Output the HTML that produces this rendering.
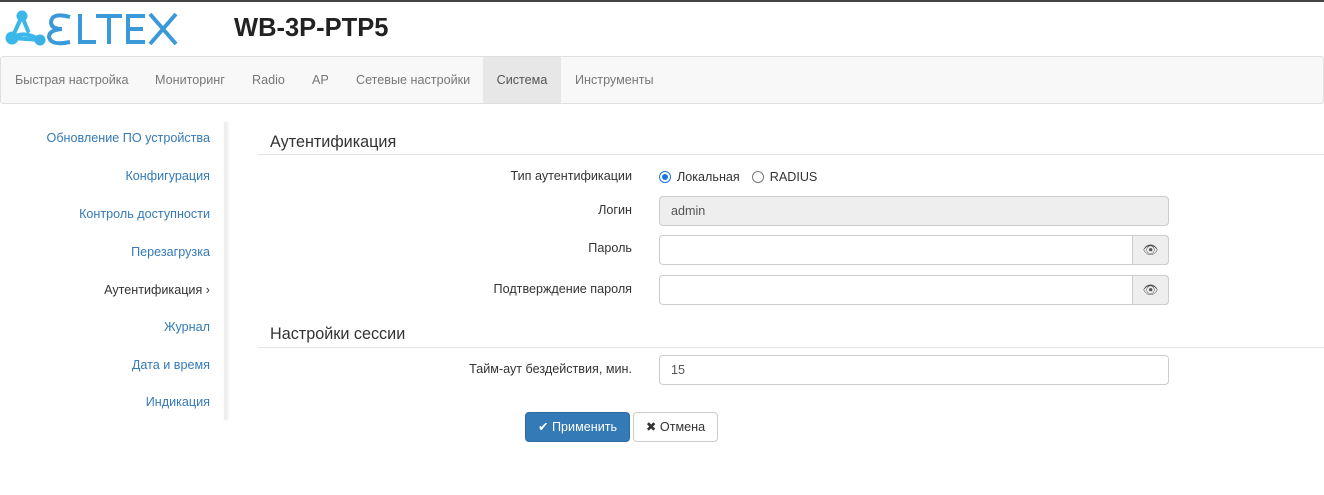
<!DOCTYPE html>
<html><head><meta charset="utf-8"><style>
*{box-sizing:border-box;margin:0;padding:0}
body{width:1324px;height:495px;background:#fff;font-family:"Liberation Sans",sans-serif;font-size:12.6px;color:#333;position:relative;overflow:hidden}
.topline{position:absolute;left:0;top:0;width:1324px;height:2px;background:#444}
.title{position:absolute;left:234px;top:14px;font-size:25.5px;font-weight:bold;color:#222}
.nav{position:absolute;left:0;top:56px;width:1324px;height:48px;background:#f8f8f8;border:1px solid #e0e0e0;border-radius:3px}
.nav span{position:absolute;top:0;height:46px;line-height:46px;color:#777;font-size:12.6px}
.side a{position:absolute;right:1114px;color:#337ab7;font-size:12.6px;text-decoration:none;white-space:nowrap}
.sb{position:absolute;left:224px;top:122px;width:3px;height:298px;background:#eee;box-shadow:1px 0 3px rgba(0,0,0,.08)}
h3{position:absolute;left:270px;font-size:16.2px;font-weight:normal;color:#333}
.hr{position:absolute;left:258px;width:1066px;height:1px;background:#e5e5e5}
.lbl{position:absolute;right:692px;font-size:12.6px;color:#333;white-space:nowrap}
.inp{position:absolute;left:659px;width:510px;height:30px;border:1px solid #ccc;border-radius:4px;background:#fff;padding:0 11px;line-height:28px;font-size:12.6px;color:#555}
.add{position:absolute;right:-1px;top:-1px;width:37px;height:30px;border:1px solid #ccc;border-radius:0 4px 4px 0;background:#eee;text-align:center;line-height:28px}
.btn{position:absolute;top:412px;height:30px;border-radius:4px;line-height:28px;font-size:12.6px;text-align:center}
</style></head><body>
<div class="topline"></div>
<svg style="position:absolute;left:0;top:0" width="190" height="56" viewBox="0 0 190 56">
<path d="M22 16 L12 38 L40 40 M22 16 L28 31" stroke="#3bb8ea" stroke-width="4" fill="none" stroke-linecap="round"/>
<path d="M12 38 Q24 30 40 40" stroke="#3bb8ea" stroke-width="4" fill="none"/>
<circle cx="22" cy="16" r="5.5" fill="#3bb8ea"/><circle cx="12" cy="38" r="6.5" fill="#3bb8ea"/><circle cx="40" cy="40" r="5.5" fill="#3ab0e6"/>
<g stroke="#3a9ad9" stroke-width="4" fill="none">
<path d="M70 17 Q52 12 51 22 Q51 29 62 29 Q49 30 49 37 Q51 46 70 42"/>
<path d="M80 14 V42 H96"/>
<path d="M96 16 H122 M109 16 V44"/>
<path d="M145 16 H128 V42 H145 M128 29 H143"/>
<path d="M150 14 L176 44 M176 14 L150 44"/>
</g>
</svg>
<div class="title">WB-3P-PTP5</div>
<div class="nav">
<span style="left:14px">Быстрая настройка</span>
<span style="left:154px">Мониторинг</span>
<span style="left:251px">Radio</span>
<span style="left:311px">AP</span>
<span style="left:355px">Сетевые настройки</span>
<span style="left:482px;width:78px;background:#e7e7e7;color:#555;text-align:center">Система</span>
<span style="left:574px">Инструменты</span>
</div>
<div class="side">
<a style="top:131px">Обновление ПО устройства</a>
<a style="top:169px">Конфигурация</a>
<a style="top:207px">Контроль доступности</a>
<a style="top:245px">Перезагрузка</a>
<a style="top:283px;color:#333">Аутентификация ›</a>
<a style="top:320px">Журнал</a>
<a style="top:358px">Дата и время</a>
<a style="top:395px">Индикация</a>
</div>
<div class="sb"></div>
<h3 style="top:133px">Аутентификация</h3><div class="hr" style="top:154px"></div>
<div class="lbl" style="top:169px">Тип аутентификации</div>
<div style="position:absolute;left:659px;top:170px;font-size:12.6px;display:flex;align-items:center">
<span style="width:12px;height:12px;border-radius:50%;border:1px solid #1a73e8;display:inline-block;position:relative"><span style="position:absolute;left:2px;top:2px;width:6px;height:6px;border-radius:50%;background:#1a73e8"></span></span>
<span style="margin-left:6px">Локальная</span>
<span style="margin-left:12px;width:12px;height:12px;border-radius:50%;border:1px solid #777;display:inline-block"></span>
<span style="margin-left:6px">RADIUS</span></div>
<div class="lbl" style="top:203px">Логин</div>
<div class="inp" style="top:196px;background:#eee">admin</div>
<div class="lbl" style="top:241px">Пароль</div>
<div class="inp" style="top:235px"><div class="add">👁</div></div>
<div class="lbl" style="top:282px">Подтверждение пароля</div>
<div class="inp" style="top:275px"><div class="add">👁</div></div>
<h3 style="top:325px">Настройки сессии</h3><div class="hr" style="top:347px"></div>
<div class="lbl" style="top:362px">Тайм-аут бездействия, мин.</div>
<div class="inp" style="top:355px">15</div>
<div class="btn" style="left:525px;width:105px;background:#337ab7;border:1px solid #2e6da4;color:#fff">✔ Применить</div>
<div class="btn" style="left:633px;width:85px;background:#fff;border:1px solid #ccc;color:#333">✖ Отмена</div>
</body></html>
